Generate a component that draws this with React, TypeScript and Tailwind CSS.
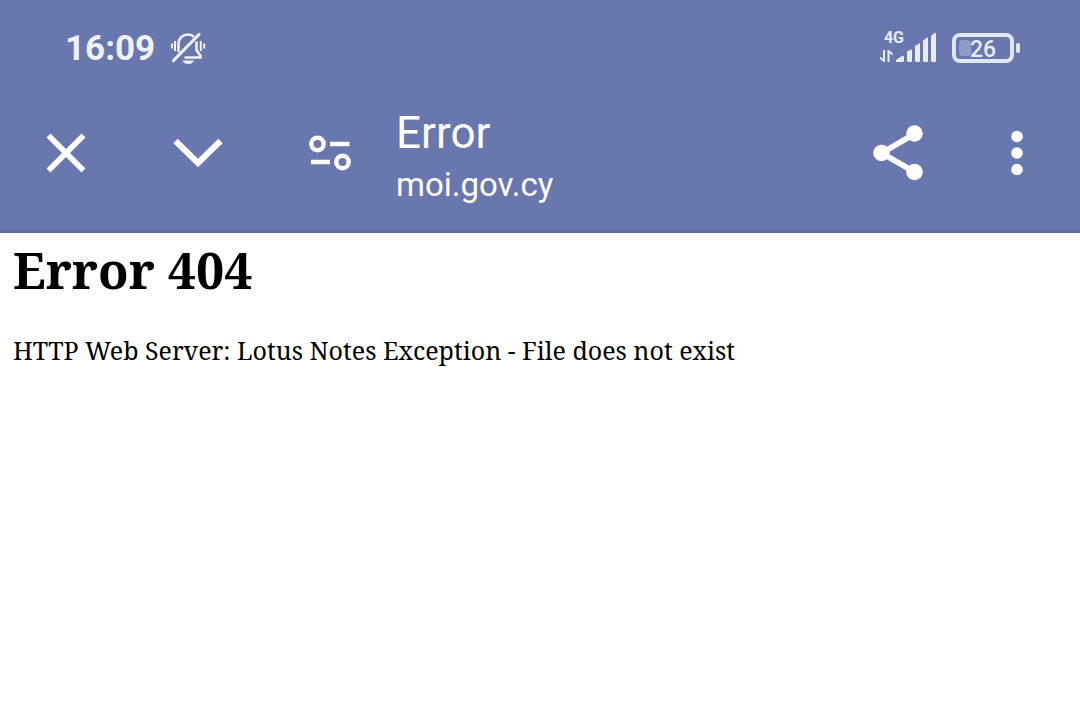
import React from 'react';

const MutedBellIcon: React.FC = () => (
    <svg width="36" height="36" viewBox="0 0 36 36" fill="none" stroke="currentColor" strokeWidth="2.6">
        <path d="M8.500 22V14C8.500 8 13 4.500 18 4.500C20.500 4.500 22.500 5.300 24 6.700" />
        <path d="M26.500 11.500V20L30.500 26V27.500H14.500" />
        <path d="M3.500 30.500L29 4.500" strokeWidth="3.2" strokeLinecap="round" />
        <path d="M5 11V21M30.800 11V21" strokeWidth="2" />
        <path d="M2 13.500V18.500M34.200 13.500V18.500" strokeWidth="2" />
        <path d="M12.500 30.500H24C23 33 21 34 18.300 34C15.500 34 13.500 33 12.500 30.500Z" fill="currentColor" stroke="none" />
    </svg>
);

const SignalIcon: React.FC = () => (
    <svg width="40" height="30" viewBox="0 0 40 30" fill="currentColor">
        <path d="M0 30V28L6 24Q8 23 8 25V28.500Q8 30 6.500 30Z" />
        <path d="M11 19.500L16 17.200V28.500Q16 30 14.500 30H12.500Q11 30 11 28.500Z" />
        <path d="M19 14L24 11V28.500Q24 30 22.500 30H20.500Q19 30 19 28.500Z" />
        <path d="M27 8.500L32 5V28.500Q32 30 30.500 30H28.500Q27 30 27 28.500Z" />
        <path d="M35 4L38.500 1Q40 0 40 2V28.500Q40 30 38.500 30H36.500Q35 30 35 28.500Z" />
    </svg>
);

const StatusBar: React.FC = () => (
    <div className="flex h-24 items-center justify-between pr-[60px] pl-[65px] text-[#edf2fc]">
        <div className="flex items-center gap-[15px]">
            <span className="pt-0.5 text-[35px] leading-10 font-bold">16:09</span>
            <MutedBellIcon />
        </div>
        <div className="flex items-center gap-4 text-[#e6ecf9]">
            <div className="flex items-end pb-1.5">
                <div className="flex flex-col">
                    <span className="pl-1 text-base leading-5 font-bold">4G</span>
                    <svg className="mt-0.5" width="14" height="12" viewBox="0 0 14 12" fill="none" stroke="currentColor" strokeWidth="2">
                        <path d="M4 0V11L0 7.500M8.500 12V1L12.500 4.500" />
                    </svg>
                </div>
                <div className="-ml-2">
                    <SignalIcon />
                </div>
            </div>
            <div className="flex items-center gap-0.5">
                <div className="relative flex h-[30px] w-[62px] items-center justify-center rounded-lg border-4 border-[#dfe6f6] pt-1">
                    <div className="absolute top-[3px] left-[3px] h-4 w-3 rounded-sm bg-[#8f9bc8]" />
                    <span className="relative text-[23px] leading-6 font-medium">26</span>
                </div>
                <div className="h-2.5 w-1 rounded-sm bg-[#dfe6f6]" />
            </div>
        </div>
    </div>
);

const Toolbar: React.FC = () => (
    <div className="flex h-[114px] items-center pr-2.5 text-white">
        <button type="button" aria-label="Close" className="flex h-full w-[132px] items-center justify-center">
            <svg width="40" height="40" viewBox="0 0 40 40" fill="none" stroke="currentColor" strokeWidth="5.6">
                <path d="M2.500 2.500L37.500 37.500M37.500 2.500L2.500 37.500" />
            </svg>
        </button>
        <button type="button" aria-label="Minimize" className="flex h-full w-[132px] items-center justify-center">
            <svg width="50" height="30" viewBox="0 0 50 30" fill="none" stroke="currentColor" strokeWidth="6">
                <path d="M2.500 3L25 25L47.500 3" />
            </svg>
        </button>
        <button type="button" aria-label="Site settings" className="flex h-full w-[132px] items-center justify-center">
            <svg width="42" height="36" viewBox="0 0 42 36" fill="none" stroke="currentColor" strokeWidth="4.4">
                <circle cx="8.500" cy="9" r="6.200" />
                <circle cx="33.500" cy="27" r="6.200" />
                <path d="M21 9H40.500M2 27H21" />
            </svg>
        </button>
        <div className="flex-1 pt-3">
            <div className="text-[44px] leading-[52px]">Error</div>
            <div className="text-[33px] leading-[52px]">moi.gov.cy</div>
        </div>
        <button type="button" aria-label="Share" className="flex h-full w-[132px] items-center justify-center">
            <svg width="50" height="56" viewBox="0 0 50 56" fill="currentColor">
                <path d="M41.500 9L8.500 28L41.500 47" fill="none" stroke="currentColor" strokeWidth="5.600" />
                <circle cx="41.500" cy="8.500" r="8.300" />
                <circle cx="8.500" cy="28" r="8.300" />
                <circle cx="41.500" cy="47" r="8.300" />
            </svg>
        </button>
        <button type="button" aria-label="More options" className="flex h-full w-[106px] items-center justify-center">
            <svg width="12" height="46" viewBox="0 0 12 46" fill="currentColor">
                <circle cx="6" cy="6.500" r="5.800" />
                <circle cx="6" cy="23" r="5.800" />
                <circle cx="6" cy="39.500" r="5.800" />
            </svg>
        </button>
    </div>
);

const App: React.FC = () => {
    return (
        <div className="min-h-screen bg-white">
            <header className="border-b-[3px] border-[#5f6d9f] bg-[#6877ad] pb-5 font-['Roboto',sans-serif]">
                <StatusBar />
                <Toolbar />
            </header>
            <main className="px-[13px] pt-2 font-['Noto_Serif','Liberation_Serif',serif] text-black">
                <h1 className="text-[50px] leading-[58px] font-bold">Error 404</h1>
                <p className="mt-8 text-[25px] leading-[38px]">
                    HTTP Web Server: Lotus Notes Exception - File does not exist
                </p>
            </main>
        </div>
    );
};

export default App;
